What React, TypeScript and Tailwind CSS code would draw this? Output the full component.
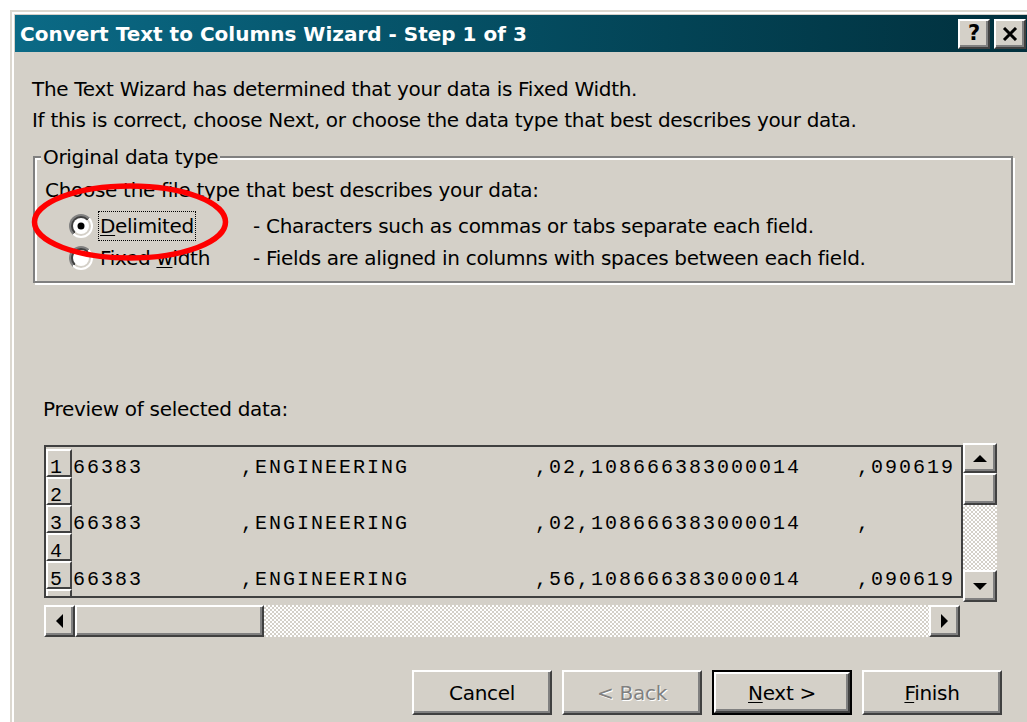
import React from 'react';

const sans = "font-['DejaVu_Sans',Verdana,sans-serif]";
const mono = "font-['Liberation_Mono','Courier_New',monospace]";

const pad = (n: number) => ' '.repeat(n);

// fixed-width preview lines; column starts at 0, 12, 33 and 56
const previewRows = [
  '66383' + pad(7) + ',ENGINEERING' + pad(9) + ',02,108666383000014' + pad(4) + ',090619',
  '',
  '66383' + pad(7) + ',ENGINEERING' + pad(9) + ',02,108666383000014' + pad(4) + ',',
  '',
  '66383' + pad(7) + ',ENGINEERING' + pad(9) + ',56,108666383000014' + pad(4) + ',090619',
];

function Raised({
  className = '',
  children,
}: {
  className?: string;
  children?: React.ReactNode;
}) {
  return (
    <div
      className={`flex items-center justify-center border-2 border-t-white border-l-white border-r-[#404040] border-b-[#404040] bg-[#d4d0c8] shadow-[inset_-2px_-2px_0_#808080] ${className}`}
    >
      {children}
    </div>
  );
}

function Arrow({ dir }: { dir: 'up' | 'down' | 'left' | 'right' }) {
  const paths = {
    up: 'M0 7 L7 0 L14 7 Z',
    down: 'M0 0 L14 0 L7 7 Z',
    left: 'M7 0 L7 14 L0 7 Z',
    right: 'M0 0 L7 7 L0 14 Z',
  };
  const vertical = dir === 'up' || dir === 'down';
  return (
    <svg
      width={vertical ? 14 : 7}
      height={vertical ? 7 : 14}
      viewBox={vertical ? '0 0 14 7' : '0 0 7 14'}
      aria-hidden="true"
    >
      <path d={paths[dir]} fill="#000" />
    </svg>
  );
}

function Radio({ id, checked }: { id: string; checked?: boolean }) {
  return (
    <svg width="24" height="24" viewBox="0 0 24 24" aria-hidden="true" className="shrink-0">
      <defs>
        <linearGradient id={`${id}-outer`} x1="0" y1="0" x2="1" y2="1">
          <stop offset="0.5" stopColor="#808080" />
          <stop offset="0.5" stopColor="#ffffff" />
        </linearGradient>
        <linearGradient id={`${id}-inner`} x1="0" y1="0" x2="1" y2="1">
          <stop offset="0.5" stopColor="#404040" />
          <stop offset="0.5" stopColor="#d4d0c8" />
        </linearGradient>
      </defs>
      <circle cx="12" cy="12" r="12" fill={`url(#${id}-outer)`} />
      <circle cx="12" cy="12" r="10" fill={`url(#${id}-inner)`} />
      <circle cx="12" cy="12" r="8" fill="#fff" />
      {checked ? <circle cx="12" cy="12" r="3.5" fill="#000" /> : null}
    </svg>
  );
}

function Track({ className = '' }: { className?: string }) {
  return (
    <div
      className={`bg-[image:repeating-conic-gradient(#d4d0c8_0%_25%,#ffffff_0%_50%)] bg-[length:4px_4px] ${className}`}
    />
  );
}

export default function App() {
  return (
    <div
      className={`relative h-[722px] w-[1027px] overflow-hidden bg-white pl-[10px] pt-[10px] text-[20px] tracking-[-0.3px] text-black ${sans}`}
    >
      {/* window frame */}
      <div className="h-[730px] w-[1020px] border-l-2 border-t-2 border-[#dcd8d0] bg-[#d4d0c8]">
        <div className="h-full border-l-2 border-t-2 border-white pl-px pt-px">
          {/* title bar */}
          <div className="flex h-[37px] items-center bg-linear-to-r from-[#0b6a86] to-[#01303d] pl-[5px] pr-[4px]">
            <span className="flex-1 text-[20px] font-bold tracking-normal text-white">
              Convert Text to Columns Wizard - Step 1 of 3
            </span>
            <Raised className="h-[30px] w-[32px]">
              <span className="text-[21px] font-bold leading-none tracking-normal">?</span>
            </Raised>
            <Raised className="ml-[4px] h-[30px] w-[32px]">
              <svg width="16" height="14" viewBox="0 0 16 14" aria-hidden="true">
                <path d="M2 1 L14 13 M14 1 L2 13" stroke="#000" strokeWidth="3" />
              </svg>
            </Raised>
          </div>

          <div className="pl-[17px]">
            <div className="mt-[22px] leading-[31px]">
              <p>The Text Wizard has determined that your data is Fixed Width.</p>
              <p>If this is correct, choose Next, or choose the data type that best describes your data.</p>
            </div>

            {/* group box */}
            <div className="relative ml-px mt-[20px] w-[980px] border-2 border-[#808080] pb-[7px] pl-[10px] pt-[16px] shadow-[inset_2px_2px_0_#fff,2px_2px_0_#fff]">
              <span className="absolute left-[6px] top-[-14px] bg-[#d4d0c8] px-[2px] leading-[26px]">
                Original data type
              </span>
              <p className="leading-[32px]">Choose the file type that best describes your data:</p>
              <div className="mt-[4px] pl-[24px]">
                <div className="flex h-[32px] items-center">
                  <div className="flex w-[184px] items-center">
                    <Radio id="opt-delimited" checked />
                    <span className="ml-[5px] flex h-[30px] items-center border border-dotted border-black px-px">
                      <span className="underline decoration-1 underline-offset-2">D</span>elimited
                    </span>
                  </div>
                  <span>- Characters such as commas or tabs separate each field.</span>
                </div>
                <div className="flex h-[32px] items-center">
                  <div className="flex w-[184px] items-center">
                    <Radio id="opt-fixed" />
                    <span className="ml-[7px]">
                      Fixed <span className="underline decoration-1 underline-offset-2">w</span>idth
                    </span>
                  </div>
                  <span>- Fields are aligned in columns with spaces between each field.</span>
                </div>
              </div>
            </div>

            <p className="ml-[11px] mt-[111px] leading-[31px]">Preview of selected data:</p>

            {/* preview grid with vertical scrollbar */}
            <div className="ml-[12px] mt-[18px] flex items-start">
              <div className="mt-[2px] h-[153px] w-[919px] overflow-hidden border-2 border-[#404040] pt-[2px]">
                {[...previewRows, ''].map((row, i) => (
                  <div key={i} className={`flex h-[28px] text-[20px] tracking-[2px] ${mono}`}>
                    <div className="h-[28px] w-[26px] shrink-0 border-2 border-t-white border-l-white border-r-[#404040] border-b-[#404040] pl-[2px] pt-[5px] leading-[24px]">
                      {i < previewRows.length ? i + 1 : ''}
                    </div>
                    <span className="whitespace-pre pl-px pt-[7px] leading-[24px]">{row}</span>
                  </div>
                ))}
              </div>
              <div className="flex h-[159px] w-[34px] flex-col">
                <Raised className="h-[30px]">
                  <Arrow dir="up" />
                </Raised>
                <Raised className="h-[32px]" />
                <Track className="flex-1" />
                <Raised className="h-[32px]">
                  <Arrow dir="down" />
                </Raised>
              </div>
            </div>

            {/* horizontal scrollbar */}
            <div className="ml-[12px] mt-[3px] flex h-[32px] w-[916px]">
              <Raised className="w-[31px]">
                <Arrow dir="left" />
              </Raised>
              <Raised className="w-[189px]" />
              <Track className="flex-1" />
              <Raised className="w-[31px]">
                <Arrow dir="right" />
              </Raised>
            </div>

            {/* wizard buttons */}
            <div className="ml-[380px] mt-[33px] flex gap-[10px]">
              <Raised className="h-[45px] w-[140px]">Cancel</Raised>
              <Raised className="h-[45px] w-[140px]">
                <span className="text-[#808080] [text-shadow:1px_1px_0_#fff]">&lt; Back</span>
              </Raised>
              <div className="h-[45px] w-[140px] border-2 border-black">
                <Raised className="h-full w-full">
                  <span>
                    <span className="underline decoration-1 underline-offset-2">N</span>ext &gt;
                  </span>
                </Raised>
              </div>
              <Raised className="h-[45px] w-[140px]">
                <span>
                  <span className="underline decoration-1 underline-offset-2">F</span>inish
                </span>
              </Raised>
            </div>
          </div>
        </div>
      </div>

      {/* red annotation ring */}
      <svg
        className="pointer-events-none absolute left-0 top-0"
        width="1027"
        height="722"
        viewBox="0 0 1027 722"
        aria-hidden="true"
      >
        <ellipse cx="130" cy="222" rx="95.5" ry="36" fill="none" stroke="#ff0000" strokeWidth="5.5" />
      </svg>
    </div>
  );
}
